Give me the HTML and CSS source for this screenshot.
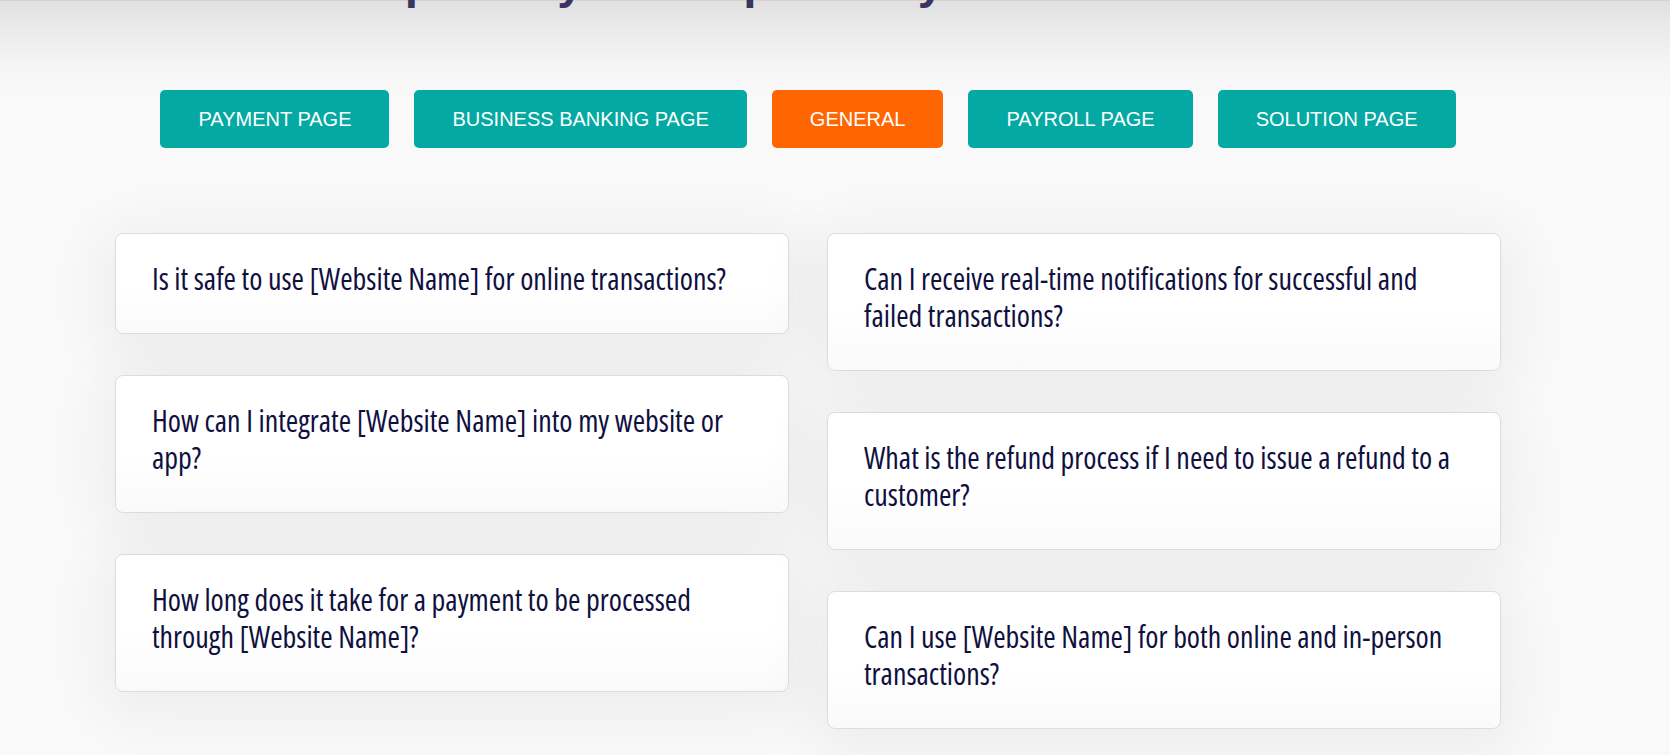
FILE: index.html
```html
<!DOCTYPE html>
<html lang="en">
<head>
<meta charset="utf-8">
<title>FAQ</title>
<link rel="stylesheet" href="styles.css">
</head>
<body>
<section class="faq">
  <h2 class="faq-title">Find Help Today All Help Clearly Here</h2>
  <div class="faq-container">
    <nav class="tabs">
      <button class="tab">PAYMENT PAGE</button>
      <button class="tab">BUSINESS BANKING PAGE</button>
      <button class="tab tab-active">GENERAL</button>
      <button class="tab">PAYROLL PAGE</button>
      <button class="tab">SOLUTION PAGE</button>
    </nav>
    <div class="faq-grid">
      <div class="faq-col">
        <div class="faq-card">Is it safe to use [Website Name] for online transactions?</div>
        <div class="faq-card">How can I integrate [Website Name] into my website or<br>app?</div>
        <div class="faq-card">How long does it take for a payment to be processed<br>through [Website Name]?</div>
      </div>
      <div class="faq-col">
        <div class="faq-card">Can I receive real-time notifications for successful and<br>failed transactions?</div>
        <div class="faq-card">What is the refund process if I need to issue a refund to a<br>customer?</div>
        <div class="faq-card">Can I use [Website Name] for both online and in-person<br>transactions?</div>
      </div>
    </div>
  </div>
</section>
</body>
</html>
```

FILE: styles.css
```css
* { box-sizing: border-box; }
html, body { margin: 0; padding: 0; }
body {
  background: #f9f9f9;
  overflow: hidden;
}
.faq {
  border-top: 1px solid #d6d2ce;
  min-height: 755px;
  background:
    linear-gradient(to bottom, #e0e0e0 0px, #ebebeb 30px, #f5f5f5 65px, #f9f9f9 95px, #f9f9f9 100%);
}
.faq-title {
  margin: -43px 0 0;
  padding-left: 217px;
  height: 48px;
  font-family: "Liberation Sans", Arial, sans-serif;
  font-weight: 700;
  font-size: 47.6px;
  line-height: 48px;
  color: #3a3560;
  white-space: nowrap;
}
.faq-container {
  width: 1386px;
  margin-left: 115px;
}
.tabs {
  display: flex;
  justify-content: center;
  gap: 25px;
  margin-top: 84px;
}
.tab {
  height: 58px;
  padding: 0 38px;
  border: 0;
  border-radius: 5px;
  background: #03a9a2;
  color: #ffffff;
  font-family: "Liberation Sans", Arial, sans-serif;
  font-size: 20px;
  line-height: 1;
  display: flex;
  align-items: center;
  justify-content: center;
}
.tab-active { background: #ff6602; }
.faq-grid {
  display: flex;
  gap: 38px;
  margin-top: 85px;
}
.faq-col {
  width: 674px;
  display: flex;
  flex-direction: column;
  gap: 41px;
}
.faq-card {
  background: linear-gradient(to bottom, #ffffff 0%, #ffffff 55%, #fafafa 100%);
  border: 1px solid #dcdcdc;
  border-radius: 8px;
  padding: 26px 16px 36px 36px;
  font-family: "Open Sans", sans-serif;
  font-stretch: condensed;
  font-size: 30px;
  line-height: 37px;
  color: #10103f;
  white-space: nowrap;
  box-shadow: 0 10px 60px 12px rgba(0, 0, 0, 0.055);
}
```
